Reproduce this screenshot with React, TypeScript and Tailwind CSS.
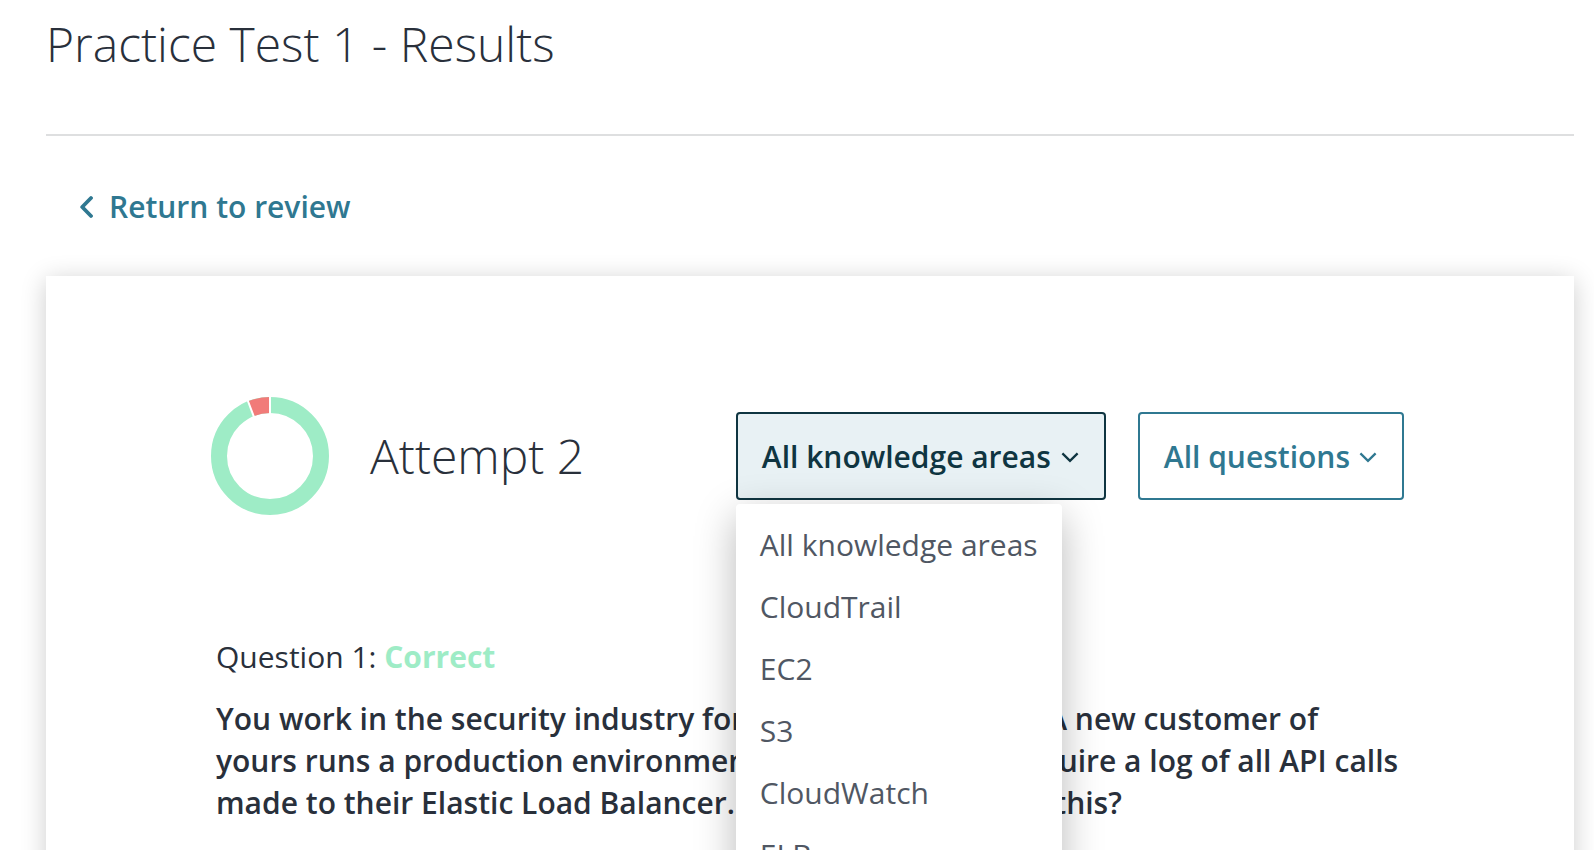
import React from 'react';

const knowledgeAreas = ['All knowledge areas', 'CloudTrail', 'EC2', 'S3', 'CloudWatch', 'ELB'];

const questionLines = [
  'You work in the security industry for a large consultancy. A new customer of',
  'yours runs a production environment in AWS and they require a log of all API calls',
  'made to their Elastic Load Balancer. How can you achieve this?',
];

function ChevronLeft() {
  return (
    <svg className="h-6 w-4" viewBox="0 0 16 24" fill="none" stroke="currentColor" strokeWidth="3.8" strokeLinecap="round" strokeLinejoin="round" aria-hidden="true">
      <path d="M14 3 5.2 12l8.8 9" />
    </svg>
  );
}

function ChevronDown() {
  return (
    <svg className="size-5" viewBox="0 0 20 20" fill="none" stroke="currentColor" strokeWidth="2.3" aria-hidden="true">
      <path d="m2.4 6.4 7.6 7.4 7.6-7.4" />
    </svg>
  );
}

function ScoreRing() {
  return (
    <svg className="size-[120px] shrink-0" viewBox="0 0 120 120" fill="none" role="img" aria-label="94% correct">
      <circle cx="60" cy="60" r="51" stroke="#9eecc6" strokeWidth="16" />
      <path d="M41.23 12.58A51 51 0 0 1 60 9" stroke="#f17b79" strokeWidth="16" />
      <path d="M60 20V0M44.5 22.4 36.6 1.5" stroke="#fff" strokeWidth="2" />
    </svg>
  );
}

export default function App() {
  return (
    <div className="h-screen overflow-hidden bg-white pr-5 pl-[46px] font-['Open_Sans',sans-serif] text-[30px] leading-[42px] text-[#29303b]">
      <header className="border-b-2 border-[#dedfe0] pt-3 pb-[58px]">
        <h1 className="text-5xl leading-[64px] font-light">Practice Test 1 - Results</h1>
      </header>

      <nav className="px-[31px] pt-[50px] pb-12">
        <a href="#review" className="inline-flex items-center gap-4 align-top font-semibold text-[#2f7891]">
          <ChevronLeft />
          Return to review
        </a>
      </nav>

      <main className="min-h-screen bg-white px-[164px] py-[120px] shadow-[0_4px_24px_rgba(0,0,0,0.2)]">
        <div className="flex items-center justify-between pr-1.5">
          <div className="flex items-center gap-10">
            <ScoreRing />
            <h2 className="text-5xl leading-[64px] font-light">Attempt 2</h2>
          </div>

          <div className="flex gap-8">
            <div className="relative">
              <button type="button" aria-expanded="true" aria-haspopup="menu" className="flex h-[88px] min-w-[370px] items-center justify-between gap-2 rounded border-2 border-[#0f3541] bg-[#e8f1f4] px-6 pt-0.5 font-semibold text-[#0f3541]">
                All knowledge areas
                <ChevronDown />
              </button>
              <ul role="menu" className="absolute top-full left-0 z-10 mt-1 rounded bg-white py-2.5 whitespace-nowrap text-[#505763] shadow-[0_12px_40px_rgba(0,0,0,0.28)]">
                {knowledgeAreas.map((area) => (
                  <li key={area} role="none">
                    <button type="button" role="menuitem" className="w-full px-6 py-2.5 text-left">
                      {area}
                    </button>
                  </li>
                ))}
              </ul>
            </div>
            <button type="button" aria-expanded="false" aria-haspopup="menu" className="flex h-[88px] items-center gap-2 rounded border-2 border-[#2f7891] bg-white px-6 pt-0.5 font-semibold text-[#2f7891]">
              All questions
              <ChevronDown />
            </button>
          </div>
        </div>

        <section className="px-1.5 pt-[120px]">
          <h3>
            Question 1: <strong className="font-bold text-[#9eecc6]">Correct</strong>
          </h3>
          <p className="pt-5 font-semibold">
            {questionLines.map((line) => (
              <span key={line} className="block whitespace-nowrap">
                {line}
              </span>
            ))}
          </p>
        </section>
      </main>
    </div>
  );
}
